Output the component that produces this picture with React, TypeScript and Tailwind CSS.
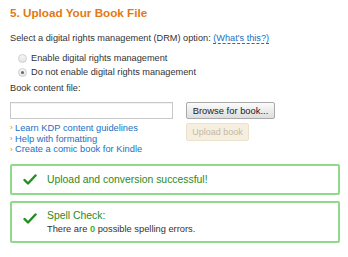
function Radio({ checked = false }: { checked?: boolean }) {
  return (
    <span className="flex h-[9px] w-[9px] items-center justify-center rounded-full border border-[#cfcfcf] bg-gradient-to-b from-[#f6f6f6] to-[#e4e4e4]">
      {checked && <span className="h-[3px] w-[3px] rounded-full bg-[#666]" />}
    </span>
  );
}

function Check() {
  return (
    <svg width="14" height="11" viewBox="0 0 14 11" className="shrink-0">
      <path d="M1.5 6 L5 9.5 L12.5 1.5" fill="none" stroke="#1f8f1f" strokeWidth="2.4" strokeLinecap="round" strokeLinejoin="round" />
    </svg>
  );
}

function HelpLink({ children }: { children: string }) {
  return (
    <div className="flex items-center h-[10.7px]">
      <span className="w-[5px] text-[8px] leading-none text-[#e47911]">›</span>
      <a className="text-[#1a6fc4]">{children}</a>
    </div>
  );
}

export default function App() {
  return (
    <div className="w-[348px] h-[257px] bg-white px-[10px] pt-[5px] text-[#333] font-['Liberation_Sans',Arial,sans-serif]">
      <h2 className="text-[11.7px] leading-[16px] font-bold text-[#e47911]">5. Upload Your Book File</h2>

      <p className="mt-[11px] text-[9.2px] leading-[12px] text-[#333]">
        Select a digital rights management (DRM) option:{" "}
        <a className="text-[#1a6fc4] border-b border-dashed border-[#1a6fc4]">(What's this?)</a>
      </p>

      <div className="mt-[8px] ml-[8px] flex flex-col gap-[2px] text-[9.2px] leading-[12px]">
        <label className="flex items-center gap-[4px]">
          <Radio />
          Enable digital rights management
        </label>
        <label className="flex items-center gap-[4px]">
          <Radio checked />
          Do not enable digital rights management
        </label>
      </div>

      <div className="mt-[4px] text-[9.2px] leading-[12px]">Book content file:</div>

      <div className="mt-[8px] flex gap-[13px]">
        <div className="w-[163px]">
          <div className="h-[17px] w-full border border-[#c8c8c8] bg-white shadow-[inset_0_1px_1px_rgba(0,0,0,0.06)]" />
          <div className="mt-[4px] text-[9.3px] leading-[10.7px]">
            <HelpLink>Learn KDP content guidelines</HelpLink>
            <HelpLink>Help with formatting</HelpLink>
            <HelpLink>Create a comic book for Kindle</HelpLink>
          </div>
        </div>
        <div className="flex flex-col items-start gap-[4px]">
          <button className="h-[17px] w-[89px] rounded-[2px] border border-[#a9a9a9] bg-gradient-to-b from-[#fbfbfb] to-[#dedede] text-[9.4px] leading-none text-[#222]">
            Browse for book...
          </button>
          <button className="h-[18px] w-[63px] rounded-[2px] border border-[#ece2cc] bg-[#f6efdf] text-[9px] leading-none text-[#c3b9a6]">
            Upload book
          </button>
        </div>
      </div>

      <div className="mt-[9px] flex h-[31px] w-[330px] items-center rounded-[2px] border-2 border-[#8fd98a] pl-[11px]">
        <Check />
        <span className="ml-[10px] text-[10.4px] text-[#2b8a1b]">Upload and conversion successful!</span>
      </div>

      <div className="mt-[6px] flex h-[42px] w-[330px] items-start rounded-[2px] border-2 border-[#8fd98a] pl-[11px] pt-[6px]">
        <span className="mt-[4px]"><Check /></span>
        <div className="ml-[10px]">
          <div className="text-[10.4px] leading-[13px] text-[#2b8a1b]">Spell Check:</div>
          <div className="mt-[2px] text-[9.3px] leading-[11px] text-[#333]">
            There are <b className="text-[#3ab82a]">0</b> possible spelling errors.
          </div>
        </div>
      </div>
    </div>
  );
}
